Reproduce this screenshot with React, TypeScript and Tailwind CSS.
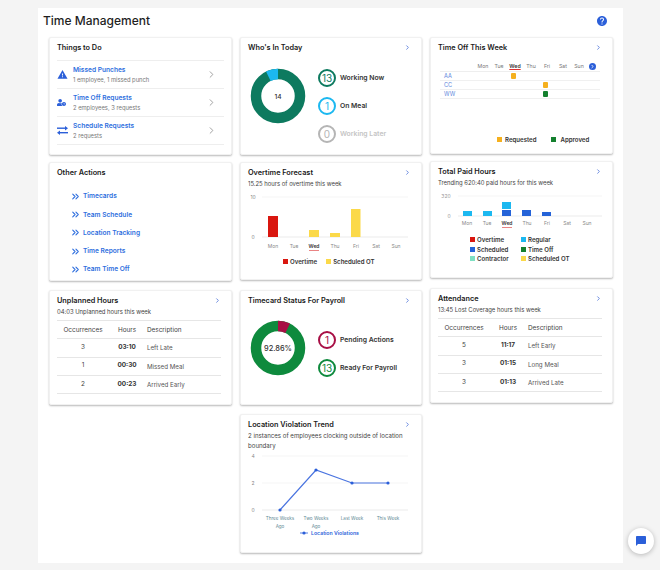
import React from "react";
import { ChevronRight, ChevronsRight } from "lucide-react";
import { MdWarning, MdHelp, MdChatBubble } from "react-icons/md";
import { FaUserClock } from "react-icons/fa";

const Arrow = () => <ChevronRight size={7} strokeWidth={3} className="text-[#5b7fdc] shrink-0" />;

function Card({ className, children }: { className: string; children: React.ReactNode }) {
  return <div className={"bg-white rounded-[2px] border border-[#f1f1f1] shadow-[0_1px_2px_rgba(0,0,0,0.28)] shrink-0 " + className}>{children}</div>;
}

function Head({ title, sub, arrow = true }: { title: string; sub?: string; arrow?: boolean }) {
  return (
    <div className="pl-[7px] pr-[10px] pt-[4px]">
      <div className="flex items-center justify-between h-[11px]">
        <div className="text-[7.3px] font-semibold text-[#1a1a1a] leading-[11px]">{title}</div>
        {arrow && <Arrow />}
      </div>
      {sub && <div className="text-[5.9px] text-[#444] leading-[9px] mt-[1px]">{sub}</div>}
    </div>
  );
}

function SwapIcon() {
  return (
    <svg width="11" height="9" viewBox="0 0 11 9" fill="currentColor">
      <rect x="0" y="1.5" width="9" height="1.4" />
      <path d="M8 0 L11 2.2 L8 4.4 Z" />
      <rect x="2" y="6" width="9" height="1.4" />
      <path d="M3 4.6 L0 6.8 L3 9 Z" />
    </svg>
  );
}

function TodoRow({ icon, title, sub }: { icon: React.ReactNode; title: string; sub: string }) {
  return (
    <div className="flex items-center h-[28px] border-b border-[#eeeeee]">
      <div className="w-[16px] flex items-center text-[#2b5fd9]">{icon}</div>
      <div className="flex-1">
        <div className="text-[6.6px] font-semibold text-[#2f6fde] leading-[9px]">{title}</div>
        <div className="text-[5.8px] text-[#777] leading-[9px]">{sub}</div>
      </div>
      <ChevronRight size={11} strokeWidth={2} className="text-[#9a9a9a] mr-[7px]" />
    </div>
  );
}

function Ring({ value, color, size = 18 }: { value: string; color: string; size?: number }) {
  return (
    <div className="rounded-full bg-white flex items-center justify-center border-2 shrink-0" style={{ width: size, height: size, borderColor: color, color }}>
      <span className="text-[10px] leading-none font-normal">{value}</span>
    </div>
  );
}

function Donut({ color, slice, sliceStart, sliceLen, label }: { color: string; slice: string; sliceStart: number; sliceLen: number; label: string }) {
  const r = 22;
  const c = 2 * Math.PI * r;
  return (
    <svg width="56" height="56" viewBox="0 0 56 56" className="shrink-0">
      <circle cx="28" cy="28" r={r} fill="none" stroke={color} strokeWidth="10.5" />
      <circle cx="28" cy="28" r={r} fill="none" stroke={slice} strokeWidth="10.5" strokeDasharray={`${(sliceLen / 360) * c} ${c}`} transform={`rotate(${sliceStart - 90} 28 28)`} />
      <text x="28" y="30.5" textAnchor="middle" fontSize={label.length > 3 ? 7.4 : 6.6} fontWeight="500" fill="#333">{label}</text>
    </svg>
  );
}

function Legend({ color, label, className = "" }: { color: string; label: string; className?: string }) {
  return (
    <div className={"flex items-center gap-[2px] " + className}>
      <span className="w-[5px] h-[5px] shrink-0" style={{ backgroundColor: color }} />
      <span className="text-[6.1px] font-semibold text-[#333] leading-[9px] whitespace-nowrap">{label}</span>
    </div>
  );
}

const days = ["Mon", "Tue", "Wed", "Thu", "Fri", "Sat", "Sun"];

function TimeOff() {
  const rows: [string, number, string][] = [["AA", 2, "#f5b01e"], ["CC", 4, "#f5b01e"], ["WW", 4, "#14802e"]];
  return (
    <div className="pl-[9px] pr-[12px] mt-[8px]">
      <div className="flex items-center h-[11px] border-b border-[#eeeeee] pl-[35px]">
        {days.map((d) => (
          <div key={d} className={"w-[16px] text-center text-[5.2px] leading-[8px] " + (d === "Wed" ? "font-semibold text-[#333] underline decoration-[#d33] underline-offset-1" : "text-[#777]")}>{d}</div>
        ))}
        <div className="ml-[2px] w-[7px] h-[7px] rounded-full bg-[#2b5fd9] flex items-center justify-center">
          <ChevronRight size={5} strokeWidth={4} className="text-white" />
        </div>
      </div>
      {rows.map(([n, col, color]) => (
        <div key={n} className="flex items-center h-[9px] border-b border-[#f0f0f0]">
          <div className="w-[35px] pl-[4px] text-[5.6px] text-[#5b86dc] leading-[8px]">{n}</div>
          {days.map((d, i) => (
            <div key={d} className="w-[16px] flex justify-center pr-[3px]">
              {i === col && <span className="w-[5.5px] h-[5.5px] rounded-[1px]" style={{ backgroundColor: color }} />}
            </div>
          ))}
        </div>
      ))}
      <div className="flex mt-[36px] pl-[57px] gap-[15px]">
        <Legend color="#f5b01e" label="Requested" className="!gap-[3px]" />
        <Legend color="#14802e" label="Approved" className="!gap-[4px]" />
      </div>
    </div>
  );
}

function Axis({ labels, xs, y, wed }: { labels: string[]; xs: number[]; y: number; wed?: boolean }) {
  return (
    <>
      {labels.map((d, i) => (
        <text key={d} x={xs[i]} y={y} textAnchor="middle" fontSize="5" fill={d === "Wed" ? "#333" : "#888"} fontWeight={d === "Wed" ? 600 : 400}>{d}</text>
      ))}
      {wed && <rect x={xs[2] - 5} y={y + 2} width="10" height="0.6" fill="#d33" />}
    </>
  );
}

function OvertimeChart() {
  const xs = [33, 54, 74, 95, 116, 136, 156];
  return (
    <svg width="180" height="68" viewBox="0 0 180 68" className="block mt-[6px] -ml-[1px]">
      <line x1="22" x2="168" y1="3" y2="3" stroke="#eee" strokeWidth="0.6" />
      <line x1="22" x2="168" y1="43" y2="43" stroke="#ddd" strokeWidth="0.6" />
      <text x="13" y="5" fontSize="5" fill="#888" textAnchor="middle">10</text>
      <text x="13" y="45" fontSize="5" fill="#888" textAnchor="middle">0</text>
      <rect x="28" y="22" width="10" height="21" fill="#d9160f" />
      <rect x="69" y="36" width="10" height="7" fill="#fbd949" />
      <rect x="90" y="39" width="10" height="4" fill="#fbd949" />
      <rect x="111" y="15" width="9.5" height="28" fill="#fbd949" />
      <Axis labels={days} xs={xs} y={54} wed />
    </svg>
  );
}

function PaidChart() {
  const xs = [37, 57, 77, 97, 117, 137, 157];
  return (
    <svg width="180" height="38" viewBox="0 0 180 38" className="block mt-[6px] -ml-[1px]">
      <line x1="28" x2="172" y1="3" y2="3" stroke="#eee" strokeWidth="0.6" />
      <line x1="28" x2="172" y1="23" y2="23" stroke="#ddd" strokeWidth="0.6" />
      <text x="16" y="5" fontSize="5" fill="#999" textAnchor="middle">320</text>
      <text x="19" y="25" fontSize="5" fill="#999" textAnchor="middle">0</text>
      <rect x="33" y="18" width="9" height="5" fill="#1cb8f0" />
      <rect x="53" y="18" width="9" height="5" fill="#1cb8f0" />
      <rect x="72" y="9" width="9" height="7" fill="#1cb8f0" />
      <rect x="72" y="17" width="9" height="6" fill="#2563d8" />
      <rect x="92" y="17" width="9" height="6" fill="#2563d8" />
      <rect x="112" y="19" width="9" height="4" fill="#2563d8" />
      <Axis labels={days} xs={xs} y={32} wed />
    </svg>
  );
}

function LocationChart() {
  const pts = [[40, 56], [76, 16], [112, 29], [148, 29]];
  const labels: [string, string?][] = [["Three Weeks", "Ago"], ["Two Weeks", "Ago"], ["Last Week"], ["This Week"]];
  return (
    <svg width="180" height="82" viewBox="0 0 180 82" className="block mt-[4px] -ml-[1px]">
      {[2, 29, 56].map((y) => <line key={y} x1="22" x2="168" y1={y} y2={y} stroke={y === 56 ? "#ddd" : "#eee"} strokeWidth="0.6" />)}
      {["4", "2", "0"].map((t, i) => <text key={t} x="13" y={4 + i * 27} fontSize="5" fill="#888" textAnchor="middle">{t}</text>)}
      <polyline points={pts.map((p) => p.join(",")).join(" ")} fill="none" stroke="#4a74e0" strokeWidth="1.2" />
      {pts.map((p) => <circle key={p[0]} cx={p[0]} cy={p[1]} r="1.6" fill="#2b5fd9" />)}
      {labels.map((l, i) => (
        <text key={l[0]} x={pts[i][0]} y="66" textAnchor="middle" fontSize="4.6" fill="#5f8a95">
          {l[0]}
          {l[1] && <tspan x={pts[i][0]} dy="8">{l[1]}</tspan>}
        </text>
      ))}
      <line x1="60" x2="68" y1="79" y2="79" stroke="#2b5fd9" strokeWidth="0.8" />
      <circle cx="64" cy="79" r="1.6" fill="#2b5fd9" />
      <text x="71" y="81" fontSize="5.2" fontWeight="600" fill="#2b5fd9">Location Violations</text>
    </svg>
  );
}

function HoursTable({ rows }: { rows: [string, string, string][] }) {
  const cols = "grid grid-cols-[52px_36px_1fr] items-center border-b border-[#e6e6e6] h-[18.3px]";
  return (
    <div className="ml-[7px] mr-[10px] mt-[4px] border-t border-[#e6e6e6]">
      <div className={cols + " pt-[2px]"}>
        <div className="text-center text-[6.4px] text-[#444]">Occurrences</div>
        <div className="text-center text-[6.4px] text-[#444]">Hours</div>
        <div className="text-[6.4px] text-[#444] pl-[2px]">Description</div>
      </div>
      {rows.map((r) => (
        <div key={r[2]} className={cols}>
          <div className="text-center text-[6.4px] text-[#444]">{r[0]}</div>
          <div className="text-center text-[6.4px] font-bold text-[#333]">{r[1]}</div>
          <div className="text-[6.2px] text-[#555] pl-[2px]">{r[2]}</div>
        </div>
      ))}
    </div>
  );
}

function StatusLine({ ring, label, color, size }: { ring: string; label: string; color: string; size?: string }) {
  return (
    <div className="flex items-center gap-[4px]">
      <Ring value={ring} color={color} />
      <span className={"text-[6.8px] font-semibold whitespace-nowrap " + (size ?? "text-[#333]")}>{label}</span>
    </div>
  );
}

export default function App() {
  return (
    <div className="relative h-[570px] w-[660px] overflow-hidden bg-[#f4f4f4] font-['Inter',sans-serif] pt-[8px]">
      <div className="ml-[38px] pt-[6px] w-[585px] h-[555px] bg-white">
        <div className="flex items-center justify-between pl-[5px] pr-[15px] h-[13px]">
          <div className="text-[12px] leading-[13px] font-medium text-[#1f1f1f]">Time Management</div>
          <MdHelp size={12} className="text-[#2b5fd9]" />
        </div>
        <div className="flex gap-[8px] pl-[11px] mt-[10px]">
          <div className="flex flex-col w-[183px]">
            <Card className="h-[118px]">
              <Head title="Things to Do" arrow={false} />
              <div className="mx-[7px] mt-[7px] border-t border-[#eeeeee]">
                <TodoRow icon={<MdWarning size={11} />} title="Missed Punches" sub="1 employee, 1 missed punch" />
                <TodoRow icon={<FaUserClock size={9} />} title="Time Off Requests" sub="2 employees, 3 requests" />
                <TodoRow icon={<SwapIcon />} title="Schedule Requests" sub="2 requests" />
              </div>
            </Card>
            <Card className="h-[119px] mt-[7px]">
              <Head title="Other Actions" arrow={false} />
              <div className="pl-[20px] mt-[10px] flex flex-col">
                {["Timecards", "Team Schedule", "Location Tracking", "Time Reports", "Team Time Off"].map((t) => (
                  <div key={t} className="flex items-center gap-[2px] h-[18.3px]">
                    <ChevronsRight size={11} strokeWidth={2.4} className="text-[#2f6fde] -translate-y-px" />
                    <span className="text-[6.6px] font-semibold text-[#2f6fde]">{t}</span>
                  </div>
                ))}
              </div>
            </Card>
            <Card className="h-[115px] mt-[9px]">
              <Head title="Unplanned Hours" sub="04:03 Unplanned hours this week" />
              <HoursTable rows={[["3", "03:10", "Left Late"], ["1", "00:30", "Missed Meal"], ["2", "00:23", "Arrived Early"]]} />
            </Card>
          </div>

          <div className="flex flex-col w-[182px]">
            <Card className="h-[118px]">
              <Head title="Who's In Today" />
              <div className="flex items-start pl-[9px] mt-[15px] gap-[12px]">
                <Donut color="#0d7a5f" slice="#1cb8f0" sliceStart={-26} sliceLen={26} label="14" />
                <div className="flex flex-col gap-[10px] mt-[1px]">
                  <StatusLine ring="13" label="Working Now" color="#0d7a5f" />
                  <StatusLine ring="1" label="On Meal" color="#1cb8f0" />
                  <StatusLine ring="0" label="Working Later" color="#b5b5b5" size="text-[#c4c4c4]" />
                </div>
              </div>
            </Card>
            <Card className="h-[118px] mt-[7px]">
              <Head title="Overtime Forecast" sub="15.25 hours of overtime this week" />
              <OvertimeChart />
              <div className="flex pl-[42px] gap-[9px] -mt-[5px]">
                <Legend color="#d9160f" label="Overtime" />
                <Legend color="#fbd949" label="Scheduled OT" />
              </div>
            </Card>
            <Card className="h-[115px] mt-[10px]">
              <Head title="Timecard Status For Payroll" />
              <div className="flex items-start pl-[9px] mt-[14px] gap-[12px]">
                <Donut color="#0e8a3d" slice="#a80f45" sliceStart={0} sliceLen={26} label="92.86%" />
                <div className="flex flex-col gap-[10px] mt-[11px]">
                  <StatusLine ring="1" label="Pending Actions" color="#a80f45" />
                  <StatusLine ring="13" label="Ready For Payroll" color="#0e8a3d" />
                </div>
              </div>
            </Card>
            <Card className="h-[139px] mt-[9px]">
              <Head title="Location Violation Trend" />
              <div className="pl-[7px] pr-[8px] text-[6.1px] text-[#444] leading-[9.5px] mt-[1px]">2 instances of employees clocking outside of location boundary</div>
              <LocationChart />
            </Card>
          </div>

          <div className="flex flex-col w-[183px]">
            <Card className="h-[117px]">
              <Head title="Time Off This Week" />
              <TimeOff />
            </Card>
            <Card className="h-[117px] mt-[7px]">
              <Head title="Total Paid Hours" sub="Trending 620:40 paid hours for this week" />
              <PaidChart />
              <div className="grid grid-cols-[51px_1fr] pl-[39px] gap-y-[0.6px] mt-[4px]">
                <Legend color="#d9160f" label="Overtime" />
                <Legend color="#1cb8f0" label="Regular" />
                <Legend color="#2563d8" label="Scheduled" />
                <Legend color="#14802e" label="Time Off" />
                <Legend color="#7fe0c3" label="Contractor" />
                <Legend color="#fbd949" label="Scheduled OT" />
              </div>
            </Card>
            <Card className="h-[115px] mt-[10px]">
              <Head title="Attendance" sub="13:45 Lost Coverage hours this week" />
              <HoursTable rows={[["5", "11:17", "Left Early"], ["3", "01:15", "Long Meal"], ["3", "01:13", "Arrived Late"]]} />
            </Card>
          </div>
        </div>
      </div>
      <div className="absolute left-[628px] top-[528px] w-[26px] h-[26px] rounded-full bg-white shadow-[0_1px_5px_rgba(0,0,0,0.25)] flex items-center justify-center">
        <MdChatBubble size={12} className="text-[#2b5fd9]" />
      </div>
    </div>
  );
}
